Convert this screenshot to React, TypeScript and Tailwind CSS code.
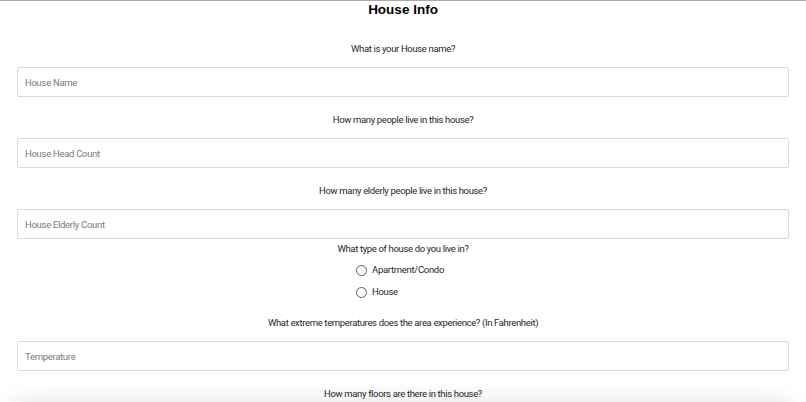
import { useState } from "react";

const questions = [
  { label: "What is your House name?", placeholder: "House Name" },
  { label: "How many people live in this house?", placeholder: "House Head Count" },
  { label: "How many elderly people live in this house?", placeholder: "House Elderly Count" },
];

function Question({ label, placeholder, className = "" }: { label: string; placeholder: string; className?: string }) {
  return (
    <div className={className}>
      <p className="text-center text-[9.5px] leading-[12px] tracking-[-0.35px] text-[#1f1f1f]">{label}</p>
      <input
        type="text"
        placeholder={placeholder}
        className="mt-[12px] block h-[30px] w-full rounded-[2px] border border-[#dadada] bg-white px-[7px] text-[9.5px] tracking-[-0.3px] text-[#333] outline-none placeholder:text-[#7a7a7a]"
      />
    </div>
  );
}

export default function App() {
  const [houseType, setHouseType] = useState<string | null>(null);

  return (
    <div className="min-h-screen border-t border-[#a9a9a9] bg-white font-['Roboto',sans-serif]">
      <div className="px-[17px] pb-10">
        <h1 className="h-[18px] text-center text-[13.5px] font-bold leading-[18px] text-black font-['Liberation_Sans',sans-serif]">
          House Info
        </h1>

        <div className="mt-[24px] flex flex-col gap-[17px]">
          {questions.map((q) => (
            <Question key={q.placeholder} label={q.label} placeholder={q.placeholder} />
          ))}
        </div>

        <p className="mt-[4px] text-center text-[9.5px] leading-[12px] tracking-[-0.35px] text-[#1f1f1f]">
          What type of house do you live in?
        </p>
        <div className="mx-auto mt-[4px] flex w-fit flex-col pr-[6px]">
          {["Apartment/Condo", "House"].map((opt) => (
            <label
              key={opt}
              className="flex h-[22px] cursor-pointer items-center gap-[5px] text-[9.5px] tracking-[-0.3px] text-[#1f1f1f]"
            >
              <span
                onClick={() => setHouseType(opt)}
                className="flex h-[11px] w-[11px] items-center justify-center rounded-full border-[1.3px] border-[#5e5e5e]"
              >
                {houseType === opt && <span className="h-[5px] w-[5px] rounded-full bg-[#5e5e5e]" />}
              </span>
              <span onClick={() => setHouseType(opt)}>{opt}</span>
            </label>
          ))}
        </div>

        <div className="mt-[14px] flex flex-col gap-[17px]">
          <Question label="What extreme temperatures does the area experience? (In Fahrenheit)" placeholder="Temperature" />
          <Question label="How many floors are there in this house?" placeholder="Floor Count" />
        </div>
      </div>

      {/* sheet peeking from below the fold */}
      <div className="pointer-events-none fixed left-[10px] right-[10px] top-[402px] h-10 rounded-t-[16px] bg-white shadow-[0_0_24px_rgba(0,0,0,0.12)]" />
    </div>
  );
}
